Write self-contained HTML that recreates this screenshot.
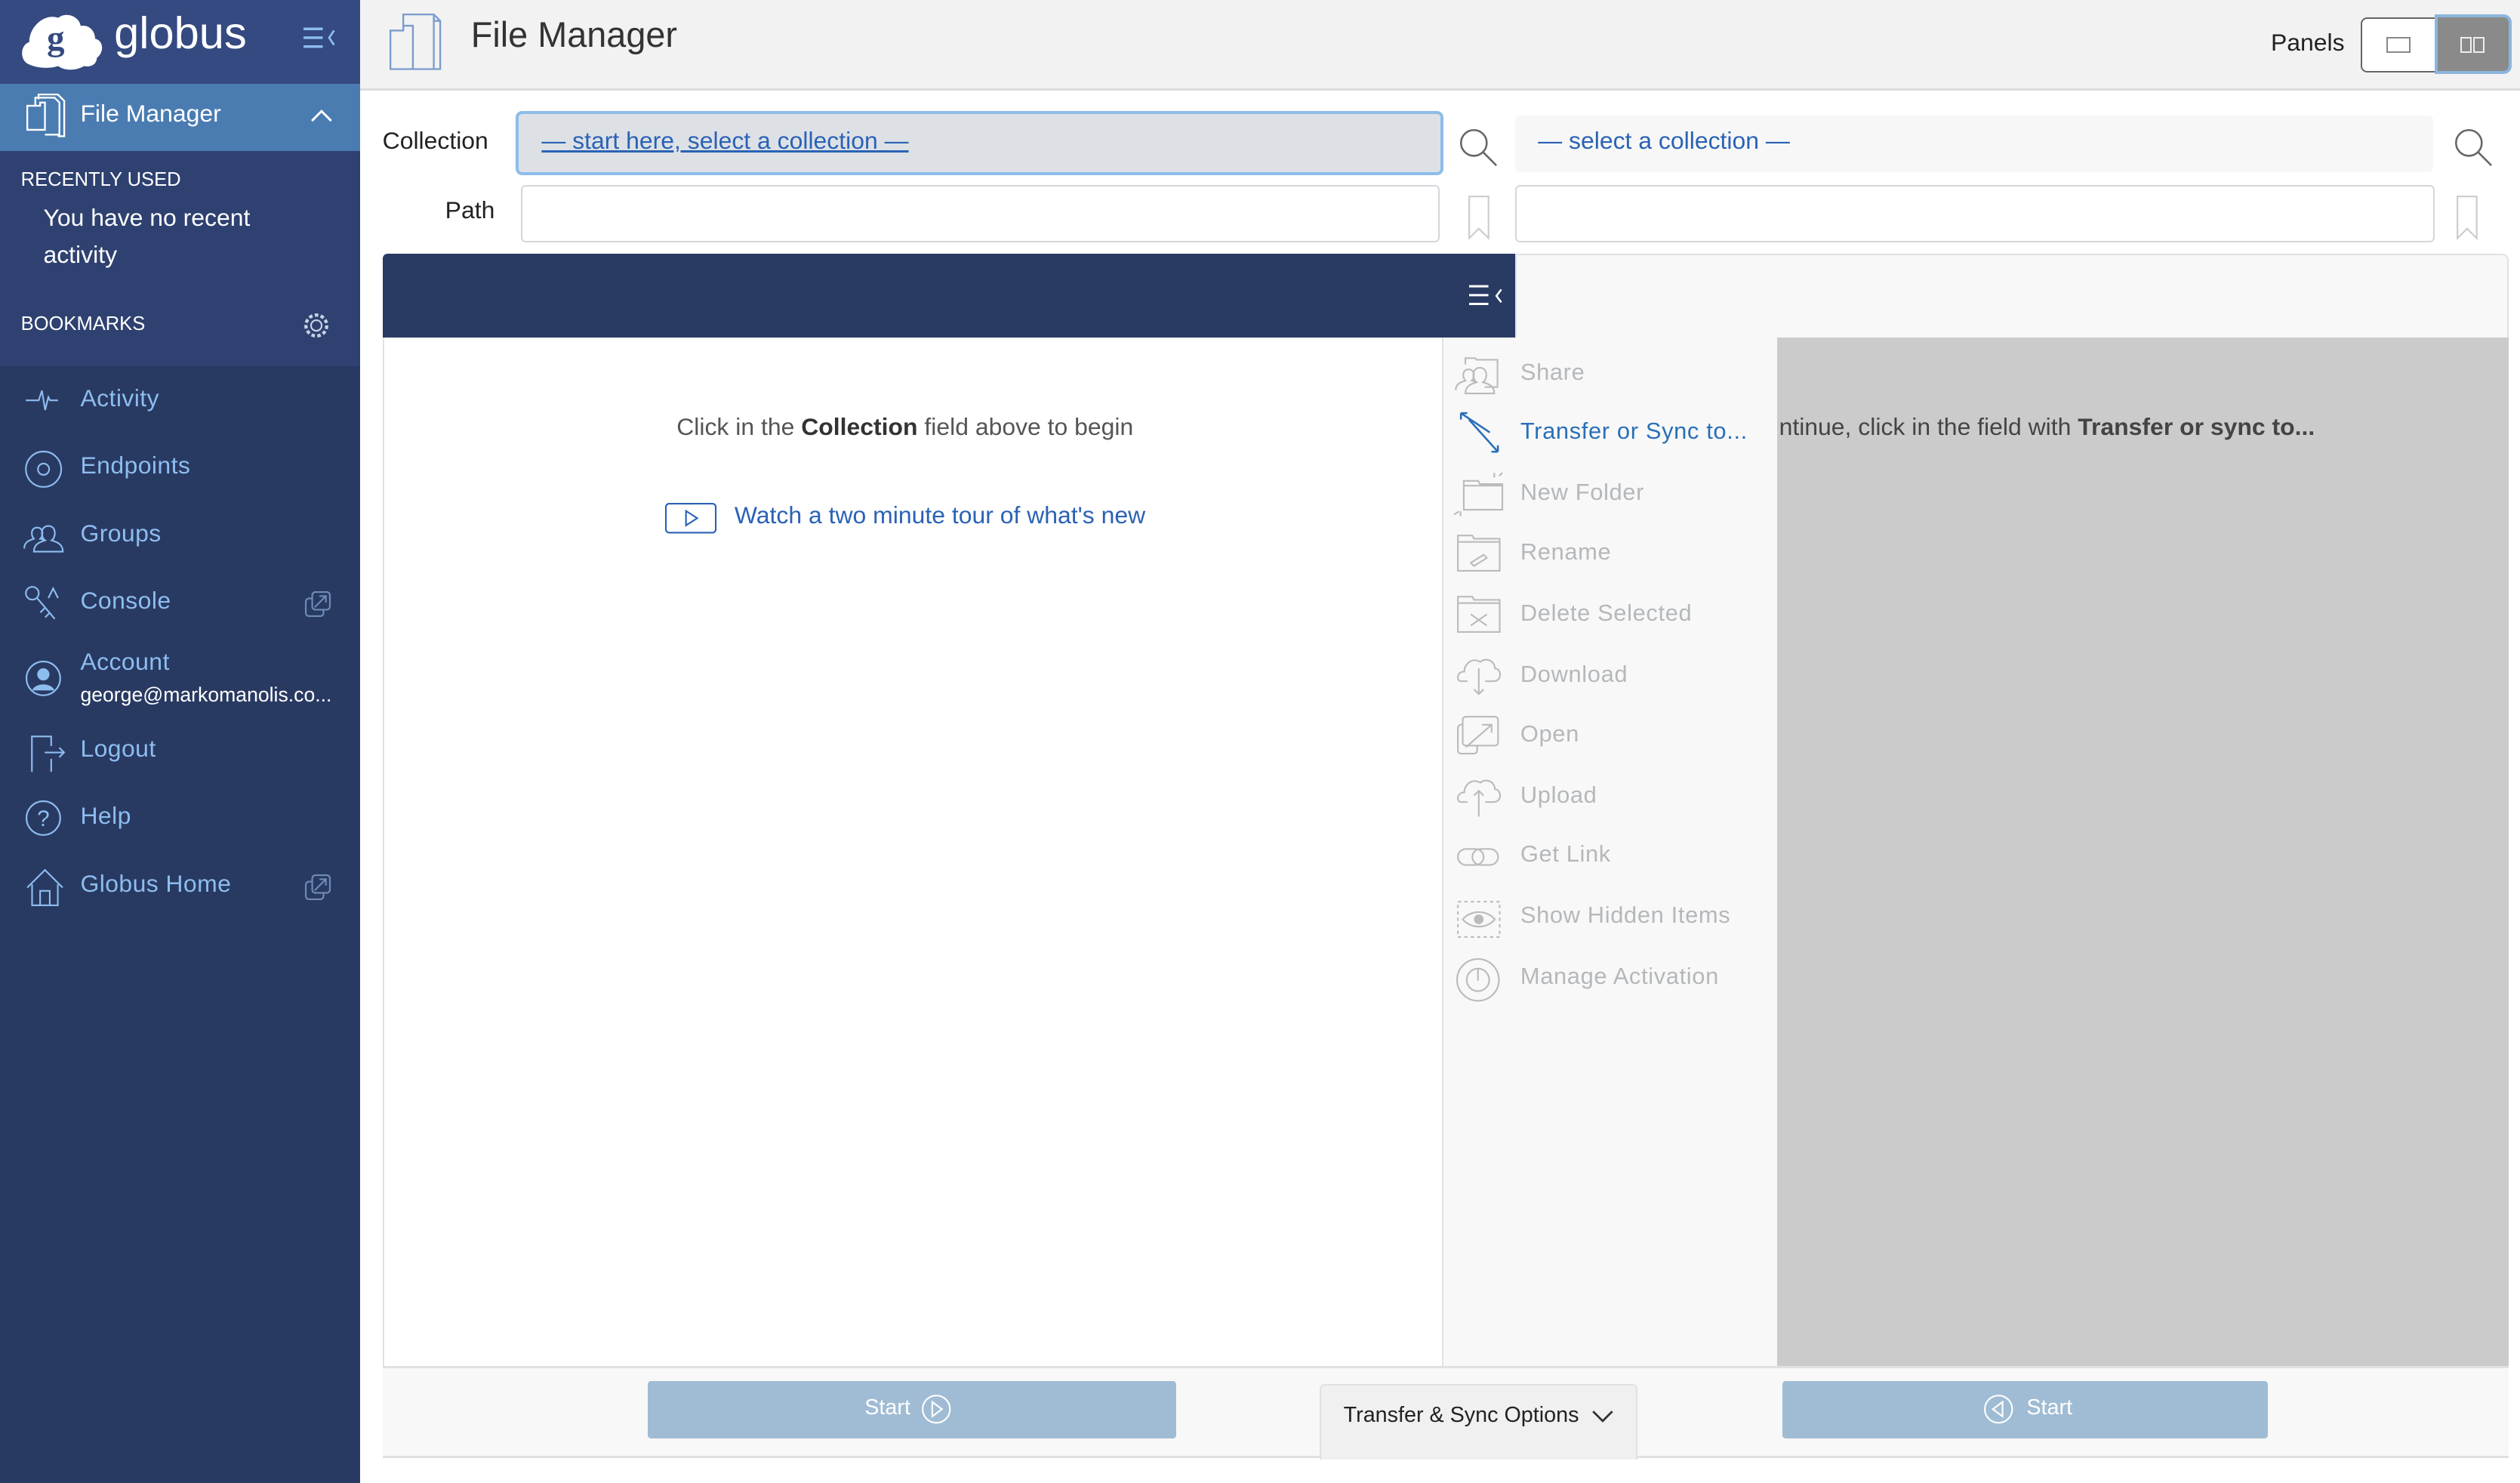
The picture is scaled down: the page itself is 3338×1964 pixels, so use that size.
<!DOCTYPE html>
<html><head><meta charset="utf-8">
<style>
html,body{margin:0;padding:0;width:3338px;height:1964px;overflow:hidden;background:#fff}
#z{zoom:2.1288;width:1568px;height:923px;position:relative;font-family:"Liberation Sans",sans-serif;}
.a{position:absolute}
.sb{left:0;top:0;width:224px;height:923px;background:#293a62}
.mi{position:absolute;left:50px;font-size:15px;color:#8dbdf0;letter-spacing:.2px}
.ic{position:absolute;left:14px}
.mt{position:absolute;left:946px;font-size:14.5px;color:#b5b8bb;letter-spacing:.3px}
.mico{position:absolute;left:904px}
svg{overflow:visible}
</style></head><body><div id="z">
<div class="a sb"></div>
<div class="a" style="left:0;top:0;width:224px;height:52px;background:#344a80"></div>
<svg class="a" style="left:12px;top:6px" width="56" height="40" viewBox="0 0 56 40"><path d="M6 34c-6-2-6-12 0-14 0-10 10-18 18-15 5-4 13-1 14 5 5-1 9 3 9 8 5 1 6 8 1 12 0 4-4 6-8 5-5 3-12 3-16 0-6 2-14 1-18-1z" fill="#fff"/><text x="17" y="25" font-size="22" font-family="Liberation Serif" font-weight="bold" fill="#344a80">g</text></svg>
<div class="a" style="left:71px;top:4px;font-size:28px;color:#fff">globus</div>
<svg class="a" style="left:189px;top:16px" width="20" height="16"><path d="M0 2h12M0 7.5h12M0 13h12" stroke="#8dbdf0" stroke-width="1.6"/><path d="M19 3l-3 4.5 3 4.5" stroke="#8dbdf0" fill="none" stroke-width="1.3"/></svg>
<div class="a" style="left:0;top:52px;width:224px;height:42px;background:#4a7cb2"></div>
<svg class="a" style="left:16px;top:58px" width="26" height="30"><path d="M1 8h8v-2h3v17H1z M8 4V1h12l4 4v22h-4" stroke="#fff" fill="none" stroke-width="1.1"/><path d="M6 8V3h12l3 3v20H12" stroke="#fff" fill="none" stroke-width="1.1"/></svg>
<div class="a" style="left:50px;top:62px;font-size:15px;color:#fff">File Manager</div>
<svg class="a" style="left:193px;top:67px" width="14" height="9"><path d="M1 8l6-6 6 6" stroke="#fff" fill="none" stroke-width="1.4"/></svg>
<div class="a" style="left:0;top:94px;width:224px;height:134px;background:#2e4170"></div>
<div class="a" style="left:13px;top:105px;font-size:12px;color:#fff">RECENTLY USED</div>
<div class="a" style="left:27px;top:124px;font-size:15px;color:#fff;line-height:23px">You have no recent<br>activity</div>
<div class="a" style="left:13px;top:195px;font-size:12px;color:#fff">BOOKMARKS</div>
<svg class="a" style="left:189px;top:194px" width="16" height="17"><circle cx="8" cy="8.5" r="3.3" stroke="#c8d4e6" fill="none"/><circle cx="8" cy="8.5" r="6.5" stroke="#c8d4e6" fill="none" stroke-dasharray="2.2 1.5" stroke-width="2"/></svg>
<svg class="ic" style="top:240px" width="24" height="20"><path d="M2 9h8l2-6 2 12 2-8 1 2h5" stroke="#8dbdf0" fill="none"/></svg>
<div class="mi" style="top:239px">Activity</div>
<svg class="ic" style="top:281px" width="26" height="22"><circle cx="13" cy="11" r="11" stroke="#8dbdf0" fill="none"/><circle cx="13" cy="11" r="3.5" stroke="#8dbdf0" fill="none"/></svg>
<div class="mi" style="top:281px">Endpoints</div>
<svg class="ic" style="top:323px" width="26" height="22"><path d="M1 18c0-4 3-5 6-6-2-2-2-7 2-7s4 5 2 7c1 0 2 1 3 1M7 20c0-5 4-6 7-7-3-2-3-9 2-9s5 7 2 9c3 1 7 2 7 7z" stroke="#8dbdf0" fill="none"/></svg>
<div class="mi" style="top:323px">Groups</div>
<svg class="ic" style="top:364px" width="26" height="24"><circle cx="6" cy="5" r="4" stroke="#8dbdf0" fill="none"/><path d="M9 8l11 13M14 14l-3 3M17 17l-3 3M16 8l3-6 3 6" stroke="#8dbdf0" fill="none"/></svg>
<div class="mi" style="top:365px">Console</div>
<svg class="a" style="left:190px;top:368px" width="16" height="16"><rect x="0.5" y="4.5" width="11" height="11" rx="2" stroke="#6f8bb8" fill="none"/><rect x="4.5" y="0.5" width="11" height="11" rx="2" stroke="#6f8bb8" fill="#293a62"/><path d="M6 10l7-7M9 3h4v4" stroke="#6f8bb8" fill="none"/></svg>
<svg class="ic" style="top:411px;left:16px" width="24" height="22"><circle cx="11" cy="11" r="10.5" stroke="#8dbdf0" fill="none"/><circle cx="11" cy="8.5" r="3.8" fill="#8dbdf0"/><path d="M4 18.5c2-5 12-5 14 0z" fill="#8dbdf0"/></svg>
<div class="mi" style="top:403px">Account</div>
<div class="a" style="left:50px;top:425px;font-size:12.5px;color:#fff">george@markomanolis.co...</div>
<svg class="ic" style="top:456px;left:18px" width="24" height="24"><path d="M2 24V2h12v6M14 16v8M10 12h12M19 9l3 3-3 3" stroke="#8dbdf0" fill="none"/></svg>
<div class="mi" style="top:457px">Logout</div>
<svg class="ic" style="top:498px;left:16px" width="24" height="24"><circle cx="11" cy="11" r="10.5" stroke="#8dbdf0" fill="none"/><text x="11" y="16" text-anchor="middle" font-size="14" fill="#8dbdf0" font-family="Liberation Sans">?</text></svg>
<div class="mi" style="top:499px">Help</div>
<svg class="ic" style="top:540px;left:16px" width="26" height="24"><path d="M1 12L12 1l11 11M4 10v13h16V10M9 23v-9h6v9" stroke="#8dbdf0" fill="none"/></svg>
<div class="mi" style="top:541px">Globus Home</div>
<svg class="a" style="left:190px;top:544px" width="16" height="16"><rect x="0.5" y="4.5" width="11" height="11" rx="2" stroke="#6f8bb8" fill="none"/><rect x="4.5" y="0.5" width="11" height="11" rx="2" stroke="#6f8bb8" fill="#293a62"/><path d="M6 10l7-7M9 3h4v4" stroke="#6f8bb8" fill="none"/></svg>

<div class="a" style="left:224px;top:0;width:1344px;height:55px;background:#f2f2f2;border-bottom:1.5px solid #dcdcdc"></div>
<svg class="a" style="left:242px;top:8px" width="38" height="36"><path d="M1 11h8V8h6v27H1z" stroke="#7a9ccb" fill="none" stroke-width="1.1"/><path d="M9 11V1h19l4 4v30h-4M28 1v4h4" stroke="#7a9ccb" fill="none" stroke-width="1.1"/><path d="M15 35h13V3" stroke="#7a9ccb" fill="none" stroke-width="1.1"/></svg>
<div class="a" style="left:293px;top:9px;font-size:22px;color:#333">File Manager</div>
<div class="a" style="left:1413px;top:18px;font-size:15px;color:#222">Panels</div>
<div class="a" style="left:1469px;top:11px;width:93px;height:34px;border:1px solid #666;border-radius:4px;background:#fff;box-sizing:border-box"></div>
<div class="a" style="left:1515px;top:9px;width:48px;height:37px;background:#8a8a8a;border:2px solid #8cb5dc;border-radius:0 5px 5px 0;box-sizing:border-box"></div>
<div class="a" style="left:1485px;top:23px;width:15px;height:10px;border:1px solid #888;box-sizing:border-box"></div>
<div class="a" style="left:1531px;top:23px;width:7px;height:10px;border:1px solid #eee;box-sizing:border-box"></div>
<div class="a" style="left:1539px;top:23px;width:7px;height:10px;border:1px solid #eee;box-sizing:border-box"></div>

<div class="a" style="left:238px;top:79px;font-size:15px;color:#222">Collection</div>
<div class="a" style="left:277px;top:122px;font-size:15px;color:#222">Path</div>
<div class="a" style="left:321px;top:69px;width:577px;height:40px;background:#dde1e6;border:2px solid #8dbde9;border-radius:4px;box-sizing:border-box"></div>
<div class="a" style="left:337px;top:79px;font-size:15px;color:#2a62b5;text-decoration:underline">— start here, select a collection —</div>
<svg class="a" style="left:907px;top:79px" width="26" height="26"><circle cx="10" cy="10" r="8" stroke="#666" fill="none" stroke-width="1.2"/><path d="M16 16l8 8" stroke="#666" stroke-width="1.2"/></svg>
<div class="a" style="left:943px;top:72px;width:571px;height:35px;background:#f7f7f7;border-radius:3px"></div>
<div class="a" style="left:957px;top:79px;font-size:15px;color:#2a62b5">— select a collection —</div>
<svg class="a" style="left:1526px;top:79px" width="26" height="26"><circle cx="10" cy="10" r="8" stroke="#666" fill="none" stroke-width="1.2"/><path d="M16 16l8 8" stroke="#666" stroke-width="1.2"/></svg>
<div class="a" style="left:324px;top:115px;width:572px;height:36px;border:1px solid #d3d7dc;border-radius:3px;box-sizing:border-box"></div>
<div class="a" style="left:943px;top:115px;width:572px;height:36px;border:1px solid #d3d7dc;border-radius:3px;box-sizing:border-box"></div>
<svg class="a" style="left:913px;top:121px" width="14" height="28"><path d="M1 1h12v26l-6-6-6 6z" stroke="#ccc" fill="none"/></svg>
<svg class="a" style="left:1528px;top:121px" width="14" height="28"><path d="M1 1h12v26l-6-6-6 6z" stroke="#ccc" fill="none"/></svg>

<div class="a" style="left:238px;top:158px;width:705px;height:52px;background:#293b63;border-radius:3px 0 0 0"></div>
<svg class="a" style="left:914px;top:177px" width="22" height="14"><path d="M0 1h12M0 6.5h12M0 12h12" stroke="#fff" stroke-width="1.4"/><path d="M20 3l-3 4 3 4" stroke="#fff" fill="none" stroke-width="1.2"/></svg>
<div class="a" style="left:943px;top:158px;width:618px;height:52px;background:#f8f8f8;border:1px solid #dfe2e5;border-bottom:none;box-sizing:border-box;border-radius:0 4px 0 0"></div>
<div class="a" style="left:238px;top:210px;width:659px;height:640px;background:#fff;border-left:1px solid #dfe2e5;box-sizing:border-box"></div>
<div class="a" style="left:897px;top:210px;width:209px;height:640px;background:#f8f8f8;border-left:1px solid #e3e3e3;box-sizing:border-box"></div>
<div class="a" style="left:1106px;top:210px;width:455px;height:640px;background:#cbcbcb"></div>
<div class="a" style="left:1107px;top:257px;font-size:15px;color:#444;white-space:nowrap;width:454px;overflow:hidden">ntinue, click in the field with <b>Transfer or sync to...</b></div>
<div class="a" style="left:421px;top:257px;font-size:15px;color:#555">Click in the <b style="color:#333">Collection</b> field above to begin</div>
<svg class="a" style="left:414px;top:313px" width="32" height="19"><rect x="0.5" y="0.5" width="31" height="18" rx="2" stroke="#2a62b5" fill="none"/><path d="M13 5v9l7-4.5z" stroke="#2a62b5" fill="none"/></svg>
<div class="a" style="left:457px;top:312px;font-size:15px;color:#2a62b5">Watch a two minute tour of what's new</div>

<svg class="mico" style="top:221px" width="30" height="24"><path d="M8 6V2h6l1 1h13v17H20M2 22c0-4 3-5 6-6-2-2-2-7 2-7s4 5 2 7c1 0 2 1 3 1M8 24c0-5 4-6 7-7-3-2-3-9 2-9s5 7 2 9c3 1 7 2 7 7z" stroke="#bbb" fill="none"/></svg>
<div class="mt" style="top:223px">Share</div>
<svg class="mico" style="top:256px;left:908px" width="26" height="30"><path d="M1 1l18 12M1 1h4M1 1v4M6 5l18 20M24 25h-4M24 25v-4" stroke="#2a6fb8" fill="none" stroke-width="1.2"/></svg>
<div class="mt" style="top:260px;color:#2a6fb8">Transfer or Sync to...</div>
<svg class="mico" style="top:293px" width="32" height="30"><path d="M7 6h9l1 2h14v16H7z M7 9h24" stroke="#bbb" fill="none"/><path d="M29 3l2-2M26 4v-3M1 27l3-2M5 28v-3" stroke="#bbb"/></svg>
<div class="mt" style="top:298px">New Folder</div>
<svg class="mico" style="top:332px;left:906px" width="28" height="26"><path d="M1 3V1h9l1 2h16v20H1z M1 5h26" stroke="#bbb" fill="none"/><path d="M9 18l8-5 2 2-8 5z" stroke="#bbb" fill="none"/></svg>
<div class="mt" style="top:335px">Rename</div>
<svg class="mico" style="top:370px;left:906px" width="28" height="26"><path d="M1 3V1h9l1 2h16v20H1z M1 5h26M9 12l10 7M19 12l-10 7" stroke="#bbb" fill="none"/></svg>
<div class="mt" style="top:373px">Delete Selected</div>
<svg class="mico" style="top:407px;left:906px" width="28" height="26"><path d="M7 17H3c-3 0-3-6 2-6 0-5 5-9 10-6 3-3 9-1 9 4 4 0 5 8-1 8h-5M14 9v16M11 22l3 3 3-3" stroke="#bbb" fill="none"/></svg>
<div class="mt" style="top:411px">Download</div>
<svg class="mico" style="top:445px;left:906px" width="28" height="26"><rect x="1" y="6" width="12" height="18" rx="2" stroke="#bbb" fill="none"/><rect x="4" y="1" width="22" height="18" rx="2" stroke="#bbb" fill="#f8f8f8"/><path d="M6 20l16-14M16 6h6v5" stroke="#bbb" fill="none"/></svg>
<div class="mt" style="top:448px">Open</div>
<svg class="mico" style="top:482px;left:906px" width="28" height="26"><path d="M7 17H3c-3 0-3-6 2-6 0-5 5-9 10-6 3-3 9-1 9 4 4 0 5 8-1 8h-5M14 26V10M11 13l3-3 3 3" stroke="#bbb" fill="none"/></svg>
<div class="mt" style="top:486px">Upload</div>
<svg class="mico" style="top:526px;left:906px" width="28" height="14"><rect x="1" y="2" width="16" height="10" rx="5" stroke="#bbb" fill="none"/><rect x="10" y="2" width="16" height="10" rx="5" stroke="#bbb" fill="none"/></svg>
<div class="mt" style="top:523px">Get Link</div>
<svg class="mico" style="top:560px;left:906px" width="28" height="24"><rect x="1" y="1" width="26" height="22" stroke="#bbb" fill="none" stroke-dasharray="2 2"/><path d="M4 12c5-6 15-6 20 0-5 6-15 6-20 0z" stroke="#bbb" fill="none"/><circle cx="14" cy="12" r="3" fill="#bbb"/></svg>
<div class="mt" style="top:561px">Show Hidden Items</div>
<svg class="mico" style="top:596px;left:906px" width="28" height="28"><circle cx="13.5" cy="13.5" r="13" stroke="#bbb" fill="none"/><circle cx="13.5" cy="13.5" r="7" stroke="#bbb" fill="none"/><path d="M13.5 6v8" stroke="#bbb"/></svg>
<div class="mt" style="top:599px">Manage Activation</div>

<div class="a" style="left:238px;top:850px;width:1323px;height:57px;background:#f8f8f8;border-top:1.5px solid #dfe2e5;border-bottom:1.5px solid #dfe2e5;box-sizing:border-box"></div>
<div class="a" style="left:403px;top:859px;width:329px;height:36px;background:#9fbcd4;border-radius:2px"></div>
<div class="a" style="left:538px;top:868px;font-size:13.5px;color:#fff">Start</div>
<svg class="a" style="left:573px;top:867px" width="20" height="20"><circle cx="9.5" cy="9.5" r="8.5" stroke="#fff" fill="none"/><path d="M7 5v9l6-4.5z" stroke="#fff" fill="none"/></svg>
<div class="a" style="left:821px;top:861px;width:198px;height:47px;background:#f0f0f0;border:1px solid #dfe2e5;border-bottom:none;border-radius:3px 3px 0 0;box-sizing:border-box"></div>
<div class="a" style="left:836px;top:873px;font-size:13.5px;color:#222">Transfer &amp; Sync Options</div>
<svg class="a" style="left:990px;top:877px" width="14" height="9"><path d="M1 1l6 6 6-6" stroke="#333" fill="none" stroke-width="1.3"/></svg>
<div class="a" style="left:1109px;top:859px;width:302px;height:36px;background:#9fbcd4;border-radius:2px"></div>
<svg class="a" style="left:1234px;top:867px" width="20" height="20"><circle cx="9.5" cy="9.5" r="8.5" stroke="#fff" fill="none"/><path d="M12 5v9l-6-4.5z" stroke="#fff" fill="none"/></svg>
<div class="a" style="left:1261px;top:868px;font-size:13.5px;color:#fff">Start</div>
</div></body></html>
